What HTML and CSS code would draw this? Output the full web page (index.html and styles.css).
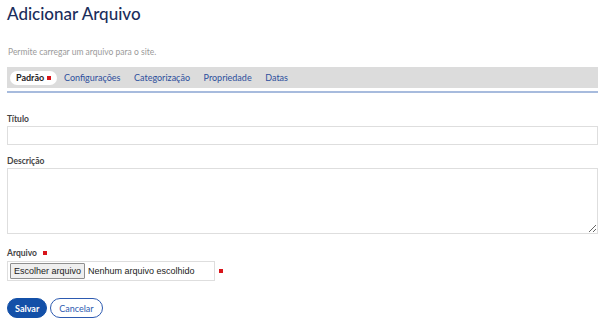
FILE: index.html
```html
<!DOCTYPE html>
<html lang="pt-BR">
<head>
    <meta charset="UTF-8">
    <title>Adicionar Arquivo</title>
    <link rel="stylesheet" href="styles.css">
</head>
<body>
    <div class="page">
        <h1 class="title">Adicionar Arquivo</h1>
        <p class="subtitle">Permite carregar um arquivo para o site.</p>

        <div class="tabs-wrap">
            <div class="tabs">
                <span class="tab active">Padrão <span class="req"></span></span>
                <span class="tab">Configurações</span>
                <span class="tab">Categorização</span>
                <span class="tab">Propriedade</span>
                <span class="tab">Datas</span>
            </div>
        </div>

        <form class="form">
            <div class="field">
                <label class="label">Título</label>
                <input type="text" class="input">
            </div>
            <div class="field">
                <label class="label">Descrição</label>
                <textarea class="textarea"></textarea>
            </div>
            <div class="field file-field">
                <label class="label">Arquivo <span class="req"></span></label>
                <div class="file-row">
                    <div class="file-box">
                        <button type="button" class="file-btn">Escolher arquivo</button>
                        <span class="file-name">Nenhum arquivo escolhido</span>
                    </div>
                    <span class="req"></span>
                </div>
            </div>
            <div class="actions">
                <button type="button" class="btn primary">Salvar</button>
                <button type="button" class="btn secondary">Cancelar</button>
            </div>
        </form>
    </div>
</body>
</html>
```

FILE: styles.css
```css
body {
    margin: 0;
    font-family: Lato, 'Open Sans', sans-serif;
    background: #fff;
    color: #333;
}

.page {
    padding: 0 11px 0 7px;
}

.title {
    margin: 4px 0 0;
    font-size: 17px;
    font-weight: 500;
    line-height: 20px;
    color: #1b2d5b;
}

.subtitle {
    margin: 22px 0 0 1px;
    font-size: 8.5px;
    line-height: 12px;
    color: #9a9a9a;
}

.tabs-wrap {
    margin-top: 9px;
    padding-bottom: 3px;
    border-bottom: 2px solid #a7bbdd;
}

.tabs {
    display: flex;
    align-items: center;
    height: 21px;
    padding: 0 3px;
    background: #dcdcdc;
}

.tab {
    padding: 0 6.8px;
    font-size: 9px;
    line-height: 14px;
    color: #2d4f9c;
}

.tab.active {
    display: flex;
    align-items: center;
    gap: 3px;
    height: 14px;
    padding: 0 6px;
    background: #fff;
    border-radius: 8px;
    color: #222;
    font-weight: 700;
}

.req {
    display: inline-block;
    width: 4px;
    height: 4px;
    background: #d8141a;
}

.form {
    margin-top: 20px;
}

.field {
    margin-bottom: 10px;
}

.file-field {
    margin-top: 13px;
}

.label {
    display: flex;
    align-items: center;
    gap: 6px;
    margin-bottom: 1px;
    font-size: 8.5px;
    line-height: 12px;
    font-weight: 700;
    color: #444;
}

.file-field .label {
    margin-bottom: 2px;
}

.input,
.textarea {
    display: block;
    box-sizing: border-box;
    width: 100%;
    margin: 0;
    border: 1px solid #dedede;
    background: #fff;
    font-family: inherit;
}

.input {
    height: 19px;
    margin-top: 1px;
}

.textarea {
    height: 66px;
    resize: vertical;
}

.file-row {
    display: flex;
    align-items: center;
    gap: 4px;
}

.file-box {
    display: flex;
    align-items: center;
    gap: 3px;
    box-sizing: border-box;
    width: 208px;
    height: 20px;
    padding: 0 2px;
    border: 1px solid #dedede;
    font-family: 'Liberation Sans', Arial, sans-serif;
    font-size: 9px;
    color: #222;
    white-space: nowrap;
}

.file-btn {
    flex-shrink: 0;
    height: 16px;
    padding: 0 3px;
    border: 1px solid #8f8f8f;
    border-radius: 1px;
    background: #efefef;
    font-family: inherit;
    font-size: 9px;
    color: #222;
    white-space: nowrap;
}

.actions {
    display: flex;
    gap: 3px;
    margin-top: 17px;
}

.btn {
    height: 20px;
    padding: 0 7px;
    border-radius: 10px;
    font-family: inherit;
    font-size: 9px;
    font-weight: 700;
}

.primary {
    background: #1350a8;
    border: 1px solid #1350a8;
    color: #fff;
}

.secondary {
    padding: 0 8px;
    background: #fff;
    border: 1px solid #2d5ab0;
    color: #2d5ab0;
    font-weight: 400;
}
```
